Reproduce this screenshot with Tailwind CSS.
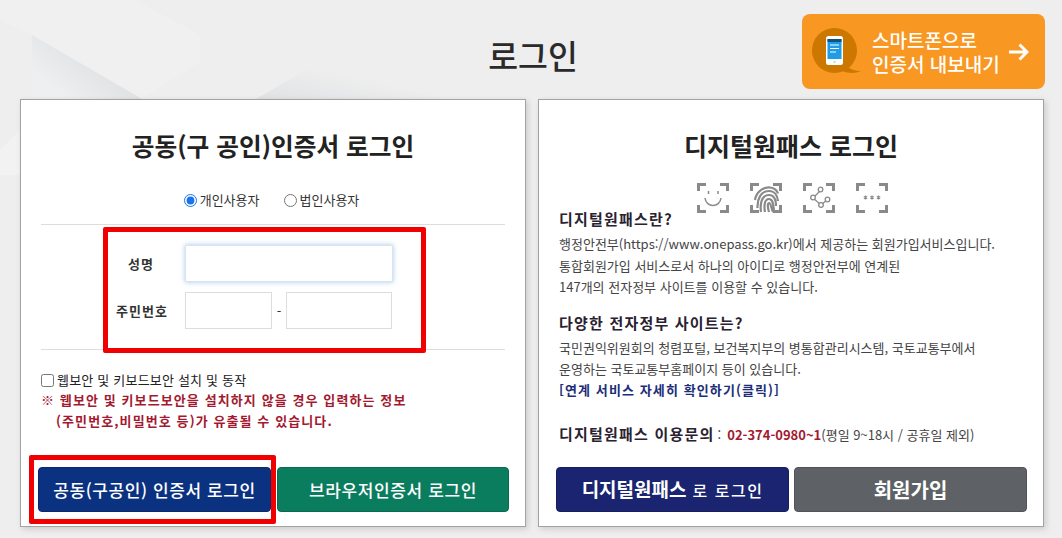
<!DOCTYPE html>
<html lang="ko">
<head>
  <meta charset="UTF-8" />
  <title>로그인</title>
  <script src="https://cdn.jsdelivr.net/npm/@tailwindcss/browser@4"></script>
</head>
<body class="relative w-[1062px] h-[538px] overflow-hidden bg-[#eeeeee] text-[#222] font-['Noto_Sans_CJK_KR','Noto_Sans',sans-serif]">

  <!-- background polygons -->
  <svg class="absolute inset-0" width="1062" height="538" viewBox="0 0 1062 538">
    <defs>
      <linearGradient id="bgA" x1="0.65" y1="0.3" x2="0.1" y2="0.7">
        <stop offset="0" stop-color="#dddfe1" />
        <stop offset="1" stop-color="#eeeff0" />
      </linearGradient>
      <linearGradient id="bgB" x1="0.05" y1="1" x2="0.4" y2="0.5">
        <stop offset="0" stop-color="#e0e2e4" />
        <stop offset="1" stop-color="#eeeeee" />
      </linearGradient>
    </defs>
    <polygon points="0,0 135,0 200,35 200,62 142,99 32,35 0,20" fill="#f0f0f1" />
    <polygon points="32,35 142,99 32,99" fill="url(#bgA)" />
    <polygon points="256,99 350,45 440,99" fill="url(#bgB)" />
    <polygon points="0,150 20,130 20,175 0,175" fill="#f2f2f3" />
  </svg>

  <div class="relative flex flex-col px-[20px]">
    <header class="relative h-[99px]">
      <h1 class="absolute left-0 right-[-4px] top-[33px] text-center text-[32.500px] leading-[44px] font-medium text-[#2a2a2a]">로그인</h1>
      <a class="absolute left-[782px] top-[14px] w-[243px] h-[75px] flex items-center rounded-[8px] bg-[#f89722] text-white">
        <svg class="ml-[10px] shrink-0" width="52" height="48" viewBox="0 0 52 48">
          <circle cx="22.500" cy="22.500" r="22.500" fill="#cc7700" />
          <path d="M34 38 Q40 43 49 43 Q40 47 30 43 Z" fill="#cc7700" />
          <rect x="14" y="8" width="17" height="29" rx="2.500" fill="#fff" />
          <rect x="15.500" y="11" width="14" height="20" fill="#1e9ce6" />
          <rect x="15.500" y="11" width="14" height="3" fill="#14527e" />
          <path d="M18 17h9M18 20.500h9M18 24h6" stroke="#fff" stroke-width="1" />
          <circle cx="22.500" cy="34" r="1.200" fill="#cfd6dc" />
        </svg>
        <span class="ml-[8px] w-[132px] shrink-0 text-[19px] leading-[24px] font-medium whitespace-nowrap">스마트폰으로<br />인증서 내보내기</span>
        <svg class="ml-[5px] shrink-0" width="20" height="18" viewBox="0 0 20 18" fill="none" stroke="#fff" stroke-width="3">
          <path d="M0 9h18M10.500 1.500L18 9l-7.500 7.500" />
        </svg>
      </a>
    </header>

    <main class="flex gap-[12px]">
      <!-- left panel -->
      <section class="relative shrink-0 w-[506px] h-[428px] bg-white border border-[#a3a3a3] shadow-[2px_2px_6px_rgba(0,0,0,0.15)] flex flex-col items-stretch px-[20px]">
        <h2 class="mt-[28px] text-center text-[24.700px] leading-[34px] font-bold text-[#222] whitespace-nowrap">공동(구 공인)인증서 로그인</h2>

        <div class="mt-[29px] pr-[3px] flex justify-center items-center text-[13px] leading-[18px] text-[#333]">
          <label class="flex items-center gap-[3px]">
            <input type="radio" name="userType" checked class="w-[13px] h-[13px] accent-[#1a73e8]" />개인사용자
          </label>
          <label class="ml-[24px] flex items-center gap-[3px]">
            <input type="radio" name="userType" class="w-[13px] h-[13px]" />법인사용자
          </label>
        </div>

        <div class="mt-[15px] border-t border-b border-[#dddddd] h-[126px] flex flex-col">
          <div class="mt-[20px] flex items-center">
            <label class="ml-[87px] w-[57px] text-[13px] tracking-[1px] font-bold text-[#333]" for="userName">성명</label>
            <input id="userName" class="w-[208px] h-[37px] border border-[#d9e4ee] shadow-[0_0_5px_rgba(130,180,230,0.7)] outline-none" />
          </div>
          <div class="mt-[10px] flex items-center">
            <label class="ml-[75px] w-[69px] text-[13px] tracking-[1px] font-bold text-[#333]">주민번호</label>
            <input class="w-[87px] h-[37px] border border-[#dddddd]" />
            <span class="w-[14px] text-center text-[13px] text-[#333]">-</span>
            <input class="w-[106px] h-[37px] border border-[#dddddd]" />
          </div>
        </div>

        <label class="mt-[21px] flex items-center gap-[3px] text-[13px] tracking-[0.2px] leading-[18px] text-[#222]">
          <input type="checkbox" class="w-[13px] h-[13px]" />웹보안 및 키보드보안 설치 및 동작
        </label>
        <p class="mt-[0px] text-[13px] leading-[21px] font-bold text-[#a31a30] tracking-[1.1px] whitespace-nowrap">
          ※ 웹보안 및 키보드보안을 설치하지 않을 경우 입력하는 정보<br />
          <span class="ml-[15px]">(주민번호,비밀번호 등)가 유출될 수 있습니다.</span>
        </p>

        <div class="absolute left-[17px] top-[367px] flex gap-[6px]">
          <button class="w-[233px] h-[45px] rounded-[4px] bg-[#0b3281] border border-[#0a2a6c] text-white text-[17px] tracking-[0.6px] font-medium">공동(구공인) 인증서 로그인</button>
          <button class="w-[232px] h-[45px] rounded-[4px] bg-[#0b7d5f] border border-[#0a6a50] text-white text-[17px] tracking-[0.6px] font-medium">브라우저인증서 로그인</button>
        </div>

        <!-- red highlights -->
        <div class="absolute left-[82px] top-[127px] w-[323px] h-[126px] border-[5px] border-[#f00000] rounded-[2px]"></div>
        <div class="absolute left-[8px] top-[355px] w-[247px] h-[69px] border-[5px] border-[#f00000] rounded-[2px]"></div>
      </section>

      <!-- right panel -->
      <section class="relative shrink-0 w-[506px] h-[428px] bg-white border border-[#a3a3a3] shadow-[2px_2px_6px_rgba(0,0,0,0.15)] flex flex-col px-[20px]">
        <h2 class="mt-[28px] text-center text-[25px] leading-[34px] font-bold text-[#222]">디지털원패스 로그인</h2>

        <div class="mt-[21px] ml-[138px] flex gap-[21px] text-[#8a8a8a]">
          <svg width="32" height="30" viewBox="0 0 32 30" fill="none" stroke="currentColor">
            <path stroke-width="3" d="M1.500 8V1.500H9M23 1.500h7.500V8M1.500 22v6.500H9M23 28.500h7.500V22" />
            <path stroke-width="1.500" d="M11.500 8v3M21 8v3M8 15c1 10 15 10 16 0" />
          </svg>
          <svg width="32" height="30" viewBox="0 0 32 30" fill="none" stroke="currentColor">
            <path stroke-width="3" d="M1.500 8V1.500H9M23 1.500h7.500V8M1.500 22v6.500H9M23 28.500h7.500V22" />
            <path stroke-width="2.200" d="M5 17C6 9 13 4 20 4.500c4 .5 7 3 8 6M7.500 25C7 16 11 8 19 8c5 0 8.500 4 9 10M11 29c-1-7 0-17 8-17 5 0 7 4 7 11M15 29c-1-5-1-13 4-13 4 0 4 5 5 11M19 29c-1-3-2-9 0-9s2 5 4 9" />
          </svg>
          <svg width="32" height="30" viewBox="0 0 32 30" fill="none" stroke="currentColor">
            <path stroke-width="3" d="M1.500 8V1.500H9M23 1.500h7.500V8M1.500 22v6.500H9M23 28.500h7.500V22" />
            <path stroke-width="1.300" d="M17 8l-7 7 8 7 6-5" />
            <circle cx="17.500" cy="6.500" r="2.300" fill="#fff" stroke-width="1.300" />
            <circle cx="10" cy="14.500" r="2.300" fill="#fff" stroke-width="1.300" />
            <circle cx="18" cy="22" r="2.300" fill="#fff" stroke-width="1.300" />
            <circle cx="24.500" cy="16.500" r="2.300" fill="#fff" stroke-width="1.300" />
          </svg>
          <svg width="32" height="30" viewBox="0 0 32 30" fill="none" stroke="currentColor">
            <path stroke-width="3" d="M1.500 8V1.500H9M23 1.500h7.500V8M1.500 22v6.500H9M23 28.500h7.500V22" />
            <path stroke-width="1.200" d="M9.500 12.500v4M7.800 13.500l3.400 2M11.200 13.500l-3.400 2M16 12.500v4M14.300 13.500l3.400 2M17.700 13.500l-3.400 2M22.500 12.500v4M20.800 13.500l3.400 2M24.200 13.500l-3.400 2" />
          </svg>
        </div>

        <h3 class="mt-[-4px] text-[15px] leading-[20px] tracking-[1.200px] font-bold text-[#2a2230]">디지털원패스란?</h3>
        <p class="mt-[4px] text-[13px] leading-[21.500px] text-[#444] whitespace-nowrap">
          행정안전부(https://www.onepass.go.kr)에서 제공하는 회원가입서비스입니다.<br />
          통합회원가입 서비스로서 하나의 아이디로 행정안전부에 연계된<br />
          147개의 전자정부 사이트를 이용할 수 있습니다.
        </p>
        <h3 class="mt-[15px] text-[15px] leading-[20px] tracking-[1.200px] font-bold text-[#2a2230]">다양한 전자정부 사이트는?</h3>
        <p class="mt-[4px] text-[13px] leading-[21.500px] text-[#444] whitespace-nowrap">
          국민권익위원회의 청렴포털, 보건복지부의 병통합관리시스템, 국토교통부에서<br />
          운영하는 국토교통부홈페이지 등이 있습니다.
        </p>
        <a class="mt-[0px] text-[13px] leading-[20px] font-bold text-[#1c2e78] tracking-[1.100px]">[연계 서비스 자세히 확인하기(클릭)]</a>

        <p class="mt-[24px] text-[15px] leading-[20px] tracking-[1.200px] font-bold text-[#2a2230] flex items-baseline whitespace-nowrap">
          디지털원패스 이용문의
          <span class="ml-[3px] text-[13px] font-normal">:</span>
          <span class="ml-[5px] text-[13px] tracking-normal text-[#a31a30]">02-374-0980~1</span>
          <span class="text-[13px] tracking-normal font-normal text-[#444]">(평일 9~18시 / 공휴일 제외)</span>
        </p>

        <div class="absolute left-[17px] top-[367px] flex gap-[5px]">
          <button class="w-[233px] h-[45px] rounded-[4px] bg-[#1a2470] border border-[#161e5e] text-white text-[16px] tracking-[1.500px] font-medium"><span class="text-[19px] tracking-normal font-bold">디지털원패스</span> 로 로그인</button>
          <button class="w-[233px] h-[45px] rounded-[4px] bg-[#5e6165] border border-[#505357] text-white text-[20px] font-bold">회원가입</button>
        </div>
      </section>
    </main>
  </div>
</body>
</html>
